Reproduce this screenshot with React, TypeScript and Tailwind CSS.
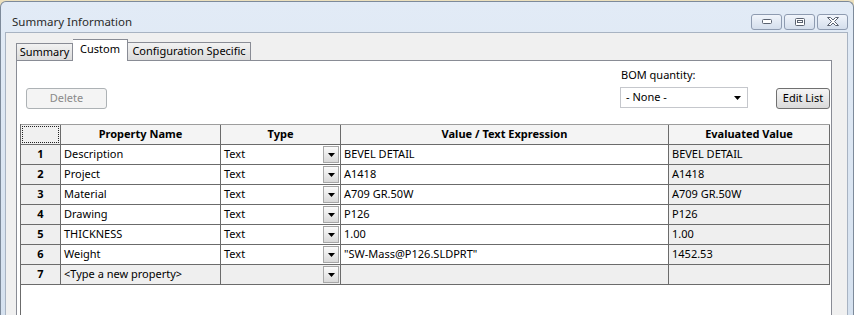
import React from "react";

const rows = [
  { name: "Description", type: "Text", value: "BEVEL DETAIL", evaluated: "BEVEL DETAIL" },
  { name: "Project", type: "Text", value: "A1418", evaluated: "A1418" },
  { name: "Material", type: "Text", value: "A709 GR.50W", evaluated: "A709 GR.50W" },
  { name: "Drawing", type: "Text", value: "P126", evaluated: "P126" },
  { name: "THICKNESS", type: "Text", value: "1.00", evaluated: "1.00" },
  { name: "Weight", type: "Text", value: '"SW-Mass@P126.SLDPRT"', evaluated: "1452.53" },
];

const cols = "grid grid-cols-[40px_160px_120px_328px_161px]";
const cell = "border-r border-b border-[#6b6b6b] h-[20px] flex items-center";

const Arrow = () => (
  <svg width="7" height="4" viewBox="0 0 7 4">
    <path d="M0 0H7L3.5 4Z" fill="#000" />
  </svg>
);

const DropBtn = () => (
  <div className="ml-auto mr-[1px] w-[16px] h-[17px] border border-[#a7a7a7] bg-gradient-to-b from-[#fbfbfb] to-[#d9d9d9] flex items-center justify-center">
    <Arrow />
  </div>
);

const CaptionBtn = ({ children }: { children: React.ReactNode }) => (
  <div className="w-[31px] h-[16px] rounded-[3px] border border-[#8e9bb0] bg-gradient-to-b from-[#f1f5fb] to-[#d4deec] flex items-center justify-center">
    {children}
  </div>
);

const App: React.FC = () => {
  return (
    <div className="w-[854px] h-[315px] overflow-hidden bg-[#ece0bd] pt-[1px] font-['Segoe_UI','Noto_Sans',sans-serif] text-[11px] text-black">
      <div className="h-[320px] rounded-tl-[6px] rounded-tr-[6px] border-t border-l border-r border-[#7d8a9a] bg-gradient-to-b from-[#e2ebf6] to-[#d5e1ef] flex flex-col">
        {/* title bar */}
        <div className="h-[30px] flex items-center pl-[11px] pr-[5px] pt-[9px]">
          <span className="text-[11.5px] text-[#2a2a2a] leading-none">Summary Information</span>
          <div className="ml-auto flex gap-[2px]">
            <CaptionBtn>
              <svg width="10" height="5" viewBox="0 0 10 5">
                <rect x="0.5" y="0.5" width="9" height="4" rx="1" fill="#fff" stroke="#5a6270" />
              </svg>
            </CaptionBtn>
            <CaptionBtn>
              <svg width="10" height="8" viewBox="0 0 10 8">
                <rect x="0.5" y="0.5" width="9" height="7" rx="1" fill="#fff" stroke="#5a6270" />
                <rect x="2.5" y="2.5" width="5" height="2" fill="none" stroke="#5a6270" />
              </svg>
            </CaptionBtn>
            <CaptionBtn>
              <svg width="12" height="9" viewBox="0 0 12 9">
                <path
                  d="M0.5 0.5H3.5L6 3L8.5 0.5H11.5L7.5 4.5L11.5 8.5H8.5L6 6L3.5 8.5H0.5L4.5 4.5Z"
                  fill="#fff"
                  stroke="#5a6270"
                  strokeLinejoin="round"
                />
              </svg>
            </CaptionBtn>
          </div>
        </div>

        {/* client area */}
        <div className="flex-1 ml-[4px] mr-[5px] border-t border-l border-r border-[#a8b3c2] bg-[#f0f0f0] pl-[10px] pr-[15px] pt-[6px] flex flex-col">
          {/* tabs */}
          <div className="flex items-end h-[21px] relative z-10">
            <div className="h-[17px] w-[57px] border border-b-0 border-[#898c95] bg-gradient-to-b from-[#f2f2f2] to-[#dcdcdc] flex items-center justify-center">
              Summary
            </div>
            <div className="h-[22px] w-[55px] mb-[-1px] border border-b-0 border-l-0 border-[#898c95] bg-white flex items-center justify-center pb-[3px]">
              Custom
            </div>
            <div className="h-[18px] w-[123px] border border-b-0 border-l-0 border-[#898c95] bg-gradient-to-b from-[#f2f2f2] to-[#dcdcdc] flex items-center justify-center">
              Configuration Specific
            </div>
          </div>

          {/* panel */}
          <div className="flex-1 border border-[#898c95] bg-white pl-[3px] pr-[1px] flex flex-col">
            <div className="h-[63px] flex items-start">
              <div className="ml-[6px] mt-[27px] w-[81px] h-[21px] rounded-[3px] border border-[#adb2b5] bg-[#f4f4f4] text-[#8a8a8a] flex items-center justify-center">
                Delete
              </div>
              <div className="ml-auto w-[128px] flex flex-col">
                <div className="mt-[6px] h-[16px] leading-[16px] pl-[1px]">BOM quantity:</div>
                <div className="mt-[4px] h-[21px] border border-[#c5c7cc] bg-white flex items-center pl-[5px] pr-[6px]">
                  <span>- None -</span>
                  <span className="ml-auto">
                    <Arrow />
                  </span>
                </div>
              </div>
              <div className="ml-[28px] mt-[27px] w-[54px] h-[21px] rounded-[3px] border border-[#707070] bg-gradient-to-b from-[#f6f6f6] to-[#dadada] flex items-center justify-center">
                Edit List
              </div>
            </div>

            {/* grid */}
            <div className="flex-1 border-l border-[#6b6b6b]">
              <div className={`${cols} border-t border-[#9d9d9d] font-bold`}>
                <div className={`${cell} bg-[#f0f0f0] p-[1px]`}>
                  <div className="w-full h-full border border-dotted border-[#222]" />
                </div>
                <div className={`${cell} bg-[#f4f4f4] justify-center`}>Property Name</div>
                <div className={`${cell} bg-[#f4f4f4] justify-center`}>Type</div>
                <div className={`${cell} bg-[#f4f4f4] justify-center`}>Value / Text Expression</div>
                <div className={`${cell} bg-[#f4f4f4] justify-center`}>Evaluated Value</div>
              </div>
              {rows.map((r, i) => (
                <div key={i} className={cols}>
                  <div className={`${cell} bg-[#efefef] justify-center font-bold`}>{i + 1}</div>
                  <div className={`${cell} pl-[3px]`}>{r.name}</div>
                  <div className={`${cell} pl-[3px]`}>
                    {r.type}
                    <DropBtn />
                  </div>
                  <div className={`${cell} pl-[3px]`}>{r.value}</div>
                  <div className={`${cell} pl-[3px] bg-[#efefef]`}>{r.evaluated}</div>
                </div>
              ))}
              <div className={`${cols} bg-[#efefef]`}>
                <div className={`${cell} justify-center font-bold`}>7</div>
                <div className={`${cell} pl-[3px]`}>&lt;Type a new property&gt;</div>
                <div className={`${cell}`}>
                  <DropBtn />
                </div>
                <div className={cell} />
                <div className={cell} />
              </div>
            </div>
          </div>
        </div>
      </div>
    </div>
  );
};

export default App;
